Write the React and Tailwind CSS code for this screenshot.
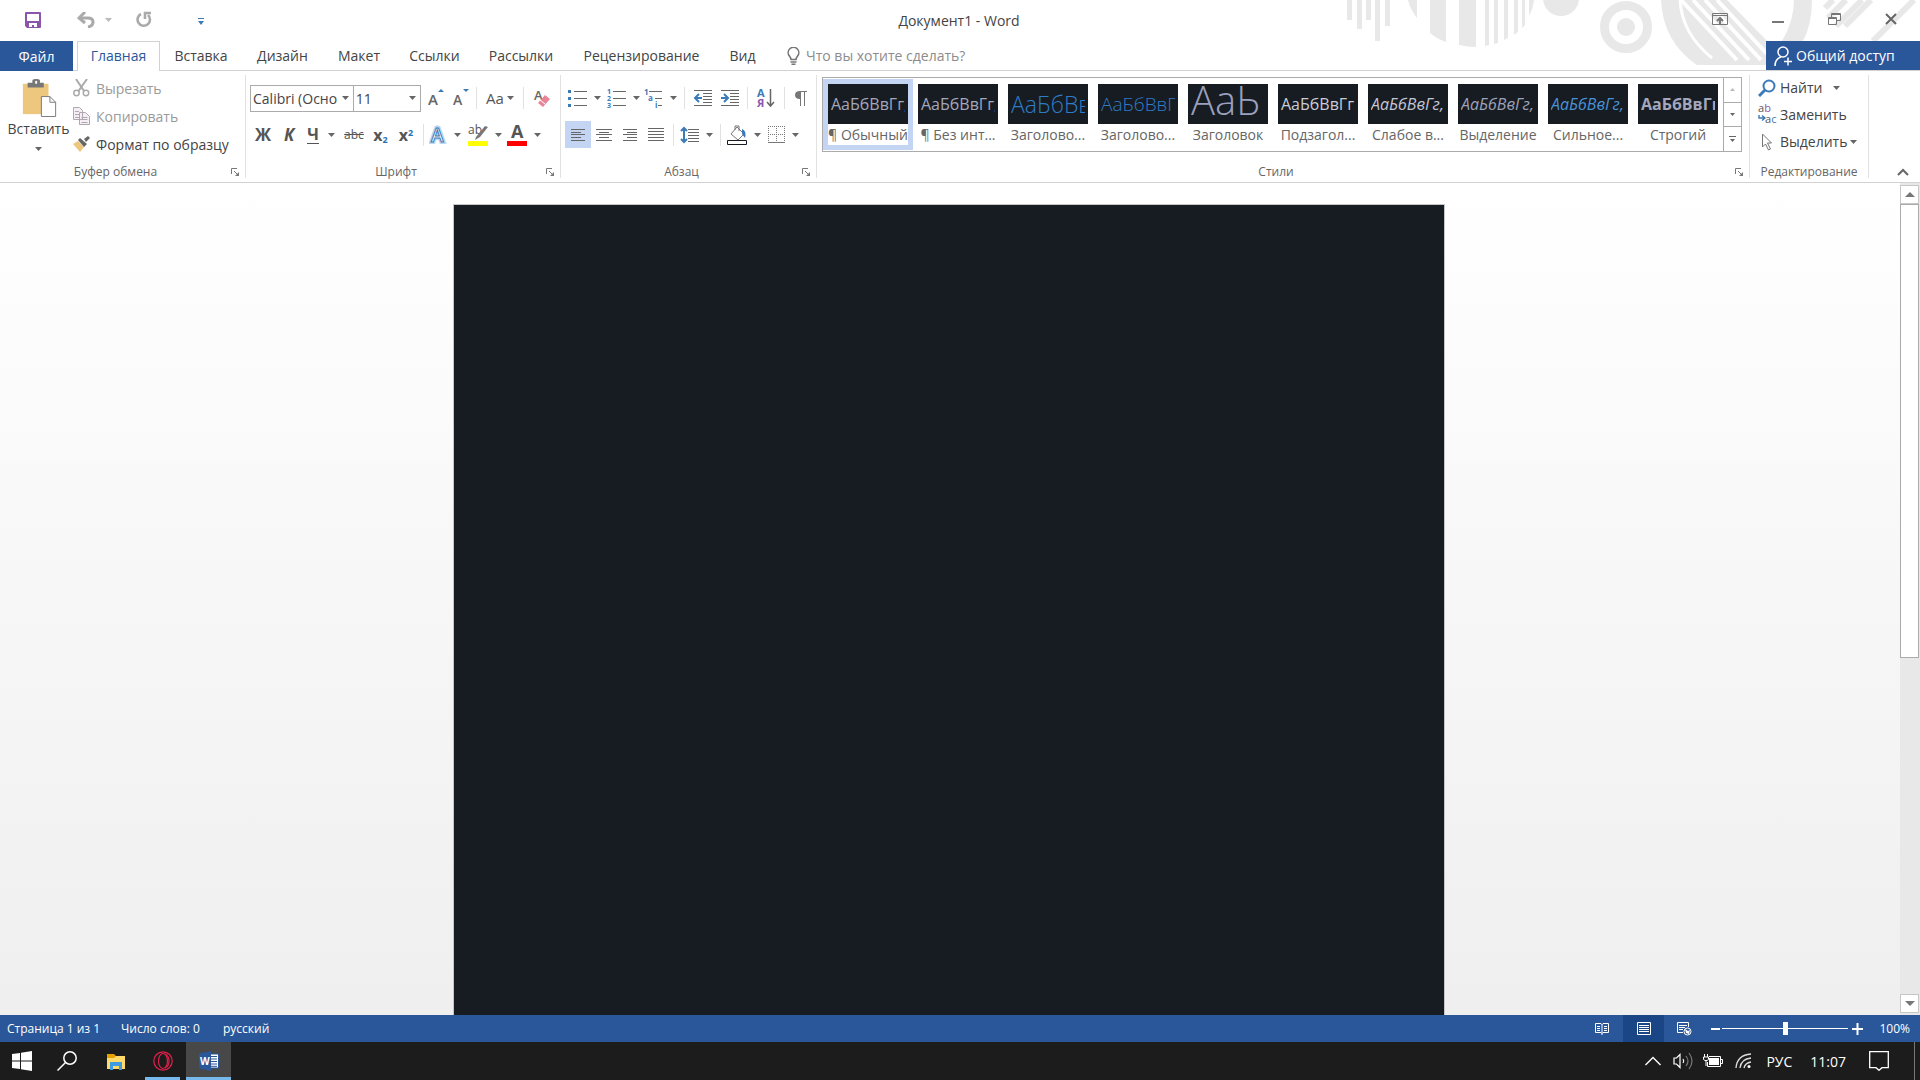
import React, { useState } from "react";
import clsx from "clsx";

const tabs = [
  { name: "Главная", width: "w-[83px]" },
  { name: "Вставка", width: "w-[82px]" },
  { name: "Дизайн", width: "w-[81px]" },
  { name: "Макет", width: "w-[72px]" },
  { name: "Ссылки", width: "w-[79px]" },
  { name: "Рассылки", width: "w-[94px]" },
  { name: "Рецензирование", width: "w-[147px]" },
  { name: "Вид", width: "w-[55px]" },
];

const styles = [
  { label: "¶ Обычный", sample: "АаБбВвГг,", look: "text-[16px] text-[#a3a7bb]" },
  { label: "¶ Без инт...", sample: "АаБбВвГг,", look: "text-[16px] text-[#a3a7bb]" },
  { label: "Заголово...", sample: "АаБбВв", look: "text-[23px] font-light text-[#2e7cc5]" },
  { label: "Заголово...", sample: "АаБбВвГ", look: "text-[19px] font-light text-[#2e7cc5]" },
  { label: "Заголовок", sample: "АаЬ", look: "text-[40px] text-[#9aa0bd] font-light -mt-2" },
  { label: "Подзагол...", sample: "АаБбВвГг", look: "text-[16px] text-[#c9ccd6]" },
  { label: "Слабое в...", sample: "АаБбВвГг,", look: "text-[16px] italic text-[#c3c6d6]" },
  { label: "Выделение", sample: "АаБбВвГг,", look: "text-[16px] italic text-[#9da2ba]" },
  { label: "Сильное...", sample: "АаБбВвГг,", look: "text-[16px] italic text-[#4a92d8]" },
  { label: "Строгий", sample: "АаБбВвГг,", look: "text-[16px] font-bold text-[#a3a7bb]" },
];

const Arrow = ({ className = "text-[#666]" }) => (
  <svg width="7" height="4" viewBox="0 0 7 4" className={clsx("shrink-0", className)}>
    <path d="M0 0h7L3.5 4z" fill="currentColor" />
  </svg>
);

const Sep = () => <div className="h-[22px] w-px shrink-0 bg-[#e1e1e1]" />;

const Tool = ({ label, width, active, arrow, children }) => (
  <button
    type="button"
    aria-label={label}
    className={clsx(
      "flex h-[27px] shrink-0 items-center justify-center gap-[7px] text-[#555]",
      width,
      active ? "bg-[#c3d5f2]" : "hover:bg-[#e3ebf7]"
    )}
  >
    {children}
    {arrow && <Arrow />}
  </button>
);

// Horizontal strokes, each one is [x1, x2, y]
const Lines = ({ w = 18, h = 16, rows, children }) => (
  <svg width={w} height={h} viewBox={`0 0 ${w} ${h}`} className="shrink-0 overflow-visible">
    {rows.map(([a, b, y]) => (
      <rect key={y} x={a} y={y} width={b - a} height="1" fill="#666" />
    ))}
    {children}
  </svg>
);

const Group = ({ title, launcher = true, className, children }) => (
  <section className={clsx("flex flex-col border-r border-[#e1e1e1]", className)}>
    <div className="flex-1">{children}</div>
    <div className="flex h-3 items-center text-[12px] text-[#666]">
      <span className={clsx("flex-1 text-center", launcher && "pl-1")}>{title}</span>
      {launcher && (
        <button type="button" aria-label={`Параметры: ${title}`} className="mr-1.5 ml-1">
          <svg width="8" height="8" viewBox="0 0 8 8" fill="none" stroke="#777">
            <path d="M.5 6V.5H6M3 3l3 3" />
            <path d="M8 4v4H4z" fill="#777" stroke="none" />
          </svg>
        </button>
      )}
    </div>
  </section>
);

const Backdrop = () => (
  <svg width="600" height="66" viewBox="0 0 600 66" className="absolute right-0 top-0" fill="#e8e8e8">
    <path d="M27 0h5v20h-5zM37 0h5v29h-5zM46 0h5v20h-5zM55 0h5v41h-5zM65 0h5v26h-5z" />
    <path d="M88 0h9v18Q90 9 88 0zM110 0h16v42Q117 39 110 33zM139 0h17v47Q147 47 139 45zM165 0h4v45l-4 1zM174 0h4v43l-4 1zM184 0h4v38l-4 2zM194 0h4v32l-4 3zM202 0h3v25l-3 3zM209 0h5q-1 9-5 16z" />
    <circle cx="241" cy="-2" r="18" />
    <circle cx="306" cy="27" r="21.5" fill="none" stroke="#e8e8e8" strokeWidth="9" />
    <circle cx="306" cy="27" r="9" />
    <path d="M341 0Q343 42 377 65H447V41L407 0z" />
    <g fill="none" stroke="#fff" strokeWidth="4">
      <path d="M360 0Q362 34 392 58" strokeWidth="3" />
      <path d="M361 0L417 60M373 0L429 60M385 0L441 60M397 0L449 56" />
    </g>
    <path d="M474 0h18q0 24-9 41h-21q12-20 12-41z" />
    <path d="M505 8L513 0M508 18L526 0M516 26L542 0M525 26L551 0M553 41L594 0" stroke="#e8e8e8" strokeWidth="6" />
  </svg>
);

const TitleBar = () => (
  <header className="relative flex h-[41px] items-center">
    <div className="flex flex-1 items-center pb-0.5 pl-[25px]">
      <button type="button" aria-label="Сохранить">
        <svg width="16" height="16" viewBox="0 0 16 16">
          <path d="M0 1q0-1 1-1h14q1 0 1 1v14q0 1-1 1H2l-2-2z" fill="#8a56ac" />
          <path d="M2 2h12v7H2zM4 11h8v4H9v-2H7v2H4z" fill="#fff" />
        </svg>
      </button>
      <button type="button" aria-label="Отменить" className="ml-9 flex items-center gap-2.5">
        <svg width="18" height="16" viewBox="0 0 18 16" fill="none" stroke="#aaa" strokeWidth="3">
          <path d="M2 6h9q5 0 5 4t-5 5" />
          <path d="M8 0L2 6l6 5" />
        </svg>
        <Arrow className="text-[#bbb]" />
      </button>
      <button type="button" aria-label="Повторить" className="ml-6">
        <svg width="16" height="17" viewBox="0 0 16 17" fill="none" stroke="#aaa" strokeWidth="2.6">
          <path d="M5 3a6.2 6.2 0 1 0 7 1" />
          <path d="M9 8V2h6" />
        </svg>
      </button>
      <button type="button" aria-label="Настройка панели" className="mt-1 ml-[46px]">
        <svg width="6" height="7" viewBox="0 0 6 7" fill="#3c7ab8">
          <path d="M0 0h6v1H0zM0 3h6L3 7z" />
        </svg>
      </button>
    </div>
    <h1 className="-ml-1 text-[14px] text-[#444]">Документ1 - Word</h1>
    <div className="flex flex-1 items-center justify-end pr-[23px] pb-1 text-[#666]">
      <Backdrop />
      <div className="relative flex items-center gap-11">
        <button type="button" aria-label="Параметры отображения ленты">
          <svg width="16" height="12" viewBox="0 0 16 12" fill="none" stroke="#777">
            <path d="M.5.5h15v11H.5zM0 2.5h16" />
            <path d="M8 11V5M5 8l3-3 3 3" strokeWidth="2" />
          </svg>
        </button>
        <button type="button" aria-label="Свернуть">
          <svg width="12" height="12" viewBox="0 0 12 12" fill="#777">
            <path d="M0 8h12v2H0z" />
          </svg>
        </button>
        <button type="button" aria-label="Восстановить">
          <svg width="13" height="12" viewBox="0 0 13 12" fill="none" stroke="#777">
            <path d="M.5 4.5h8v7h-8zM0 5.5h9M3.5 4V.5h9v7H9M3 1.5h10" />
          </svg>
        </button>
        <button type="button" aria-label="Закрыть">
          <svg width="12" height="12" viewBox="0 0 12 12" stroke="#666" strokeWidth="2">
            <path d="M1 1l10 10M11 1L1 11" />
          </svg>
        </button>
      </div>
    </div>
  </header>
);

const TabBar = () => {
  const [current, setCurrent] = useState("Главная");
  return (
    <nav className="relative flex h-[30px] border-b border-[#d2d2d2] text-[14px] text-[#444]">
      <button type="button" className="mr-1 h-[30px] w-[73px] shrink-0 bg-[#2a579a] text-white">
        Файл
      </button>
      {tabs.map((tab) => (
        <button
          key={tab.name}
          type="button"
          onClick={() => setCurrent(tab.name)}
          className={clsx(
            "h-[30px] shrink-0 pb-0.5 whitespace-nowrap",
            tab.width,
            tab.name === current && "border border-b-0 border-[#d2d2d2] bg-white text-[#2a579a]"
          )}
        >
          {tab.name}
        </button>
      ))}
      <label className="ml-[17px] flex items-center gap-1.5">
        <svg width="13" height="18" viewBox="0 0 13 18" fill="none" stroke="#777" strokeWidth="1.6">
          <path d="M4 12.5Q4 11 2.4 9A5.3 5.3 0 1 1 10.600 9Q9 11 9 12.500z" />
          <path d="M3.500 15h6M4.500 17.200h4" />
        </svg>
        <input
          aria-label="Что вы хотите сделать?"
          placeholder="Что вы хотите сделать?"
          className="w-[180px] bg-transparent outline-none placeholder:text-[#8c8c8c]"
        />
      </label>
      <button
        type="button"
        className="ml-auto flex h-[29px] w-[154px] items-center gap-1 bg-[#2a579a] pl-2 text-white"
      >
        <svg width="18" height="20" viewBox="0 0 18 20" fill="none" stroke="#fff" strokeWidth="1.5">
          <circle cx="9" cy="6" r="5" />
          <path d="M1 20q0-7 6-9M10 15.500h8M14 11.500v8" />
        </svg>
        Общий доступ
      </button>
    </nav>
  );
};

const Clipboard = () => (
  <Group title="Буфер обмена" className="w-[246px]">
    <div className="flex">
      <button type="button" className="flex w-[73px] flex-col items-center pt-1 pl-1 text-[14px] leading-5">
        <svg width="36" height="38" viewBox="0 0 36 40">
          <path d="M1 5h27v32H1z" fill="#eec77e" />
          <path d="M6 9V4h5V2q0-2 3-2h2q3 0 3 2v2h4v5z" fill="#777" />
          <path d="M14 2h2v3h-2z" fill="#fff" />
          <path d="M20.500 18.500h9l6 6v15h-15z" fill="#fff" stroke="#777" />
          <path d="M29.500 18.500v6h6" fill="none" stroke="#777" />
        </svg>
        <span className="mt-0.5">Вставить</span>
        <Arrow className="mt-2 text-[#666]" />
      </button>
      <div className="-mt-px flex flex-col text-[14px]">
        <button type="button" className="flex h-7 items-center gap-1.5 text-[#9a9a9a]">
          <svg width="17" height="18" viewBox="0 0 17 18" fill="none" stroke="#aaa" strokeWidth="1.5">
            <circle cx="3.500" cy="14" r="2.700" />
            <circle cx="13" cy="14" r="2.700" />
            <path d="M3 0l8 12M14 0L5.500 12" strokeWidth="2" />
          </svg>
          Вырезать
        </button>
        <button type="button" className="flex h-7 items-center gap-1.5 text-[#9a9a9a]">
          <svg width="17" height="18" viewBox="0 0 17 18" fill="#f5eef5" stroke="#b0a8b0">
            <path d="M.5.500h6l3 3v9h-9zM6.500 5.500h6l4 4v8h-10z" />
            <path d="M2 4.500h4M2 7.500h4M2 10.500h4M8.500 10.500h6M8.500 12.500h6M8.500 15.500h6" />
          </svg>
          Копировать
        </button>
        <button type="button" className="flex h-7 items-center gap-1.5">
          <svg width="17" height="16" viewBox="0 0 17 16">
            <path d="M0 8l5-3 6 6-4 5z" fill="#eec77e" />
            <path d="M5 4l2-2 7 6-3 3zM11 3l4-3 2 2-4 4z" fill="#666" />
          </svg>
          Формат по образцу
        </button>
      </div>
    </div>
  </Group>
);

const FontGroup = () => (
  <Group title="Шрифт" className="w-[315px]">
    <div className="flex h-[34px] items-center pl-1 pt-3">
      <div className="flex h-[27px] w-[105px] items-center border border-[#ababab] pr-1">
        <input aria-label="Шрифт" defaultValue="Calibri (Основной текст)" className="w-0 flex-1 pl-0.5 text-[14px] outline-none" />
        <Arrow className="ml-1 text-[#666]" />
      </div>
      <div className="-ml-px flex h-[27px] w-[69px] items-center border border-[#ababab] pr-1">
        <input aria-label="Размер шрифта" defaultValue="11" className="w-0 flex-1 pl-0.5 text-[14px] outline-none" />
        <Arrow />
      </div>
      <div className="flex items-center pl-0.5">
        <Tool label="Увеличить размер" width="w-[26px]">
          <svg width="17" height="20" viewBox="0 0 17 20">
            <text x="0" y="17" fontSize="15" fontWeight="600" fill="#666">A</text>
            <path d="M10 4l3-3 3 3z" fill="#3c7ab8" />
          </svg>
        </Tool>
        <Tool label="Уменьшить размер" width="w-[25px]">
          <svg width="17" height="20" viewBox="0 0 17 20">
            <text x="0" y="17" fontSize="14" fontWeight="600" fill="#666">A</text>
            <path d="M10 1h6l-3 3z" fill="#3c7ab8" />
          </svg>
        </Tool>
        <div className="pl-0.5"><Sep /></div>
        <Tool label="Регистр" width="w-[46px]" arrow>
          <span className="-mr-1 text-[15px]">Aa</span>
        </Tool>
        <Sep />
        <Tool label="Очистить формат" width="w-[36px]">
          <svg width="18" height="20" viewBox="0 0 18 20">
            <text x="1" y="12" fontSize="13" fontWeight="600" fill="#666">A</text>
            <path d="M12 7l5 4-7 8-5-4z" fill="#e8849a" />
            <path d="M7 12l5 4" stroke="#fff" />
          </svg>
        </Tool>
      </div>
    </div>
    <div className="mt-3 flex items-center pl-1">
      <Tool label="Полужирный" width="w-[26px]"><b className="text-[17px]">Ж</b></Tool>
      <Tool label="Курсив" width="w-[26px]"><b className="text-[17px] italic">К</b></Tool>
      <Tool label="Подчеркнутый" width="w-[38px]" arrow>
        <span className="mr-0.5 border-b border-[#555] text-[16px] leading-[17px] font-bold">Ч</span>
      </Tool>
      <Tool label="Зачеркнутый" width="w-[28px]"><s className="text-[12px]">abc</s></Tool>
      <Tool label="Подстрочный" width="w-[25px]">
        <span className="text-[16px] font-bold">x<sub className="text-[9px] text-[#2a70b8]">2</sub></span>
      </Tool>
      <Tool label="Надстрочный" width="w-[26px]">
        <span className="text-[16px] font-bold">x<sup className="text-[9px] text-[#2a70b8]">2</sup></span>
      </Tool>
      <div className="pl-1"><Sep /></div>
      <Tool label="Текстовые эффекты" width="w-[42px]" arrow>
        <svg width="18" height="20" viewBox="0 0 18 20">
          <text x="2" y="17" fontSize="19" fontWeight="600" fill="#fff" stroke="#bcd8f4" strokeWidth="4">A</text>
          <text x="2" y="17" fontSize="19" fontWeight="600" fill="#fff" stroke="#3c7ab8" strokeWidth="1">A</text>
        </svg>
      </Tool>
      <Tool label="Цвет выделения" width="w-[38px]" arrow>
        <svg width="20" height="22" viewBox="0 0 20 22" className="overflow-visible">
          <text x="0" y="10" fontSize="12" fill="#555">ab</text>
          <path d="M17 2l3 1-8 10-5 3 1-3z" fill="#777" />
          <path d="M0 17h20v5H0z" fill="#ff0" />
        </svg>
      </Tool>
      <Tool label="Цвет текста" width="w-[40px]" arrow>
        <svg width="20" height="22" viewBox="0 0 20 22" className="overflow-visible">
          <text x="4" y="14" fontSize="18" fontWeight="700" fill="#555">A</text>
          <path d="M0 17h20v5H0z" fill="#f00" />
        </svg>
      </Tool>
    </div>
  </Group>
);

const Paragraph = () => (
  <Group title="Абзац" className="w-[256px]">
    <div className="flex h-[34px] items-center pl-1 pt-3">
      <Tool label="Маркеры" width="w-[39px]" arrow>
        <Lines w={19} h={18} rows={[[6, 19, 2], [6, 19, 9], [6, 19, 16]]}>
          <path d="M0 1h3v3H0zM0 8h3v3H0zM0 15h3v3H0z" fill="#3c7ab8" />
        </Lines>
      </Tool>
      <Tool label="Нумерация" width="w-[38px]" arrow>
        <Lines w={19} h={19} rows={[[6, 19, 2], [6, 19, 9], [6, 19, 16]]}>
          <g fontSize="7" fontWeight="700" fill="#3c7ab8">
            <text x="0" y="5">1</text>
            <text x="0" y="12">2</text>
            <text x="0" y="19">3</text>
          </g>
        </Lines>
      </Tool>
      <Tool label="Многоуровневый список" width="w-[36px]" arrow>
        <Lines w={19} h={19} rows={[[5, 18, 2], [11, 18, 9], [14, 18, 16]]}>
          <g fontSize="8" fontWeight="700" fill="#3c7ab8">
            <text x="0" y="6">1</text>
            <text x="4" y="12">a</text>
            <text x="11" y="19">i</text>
          </g>
        </Lines>
      </Tool>
      <div className="pr-1 pl-1.5"><Sep /></div>
      <Tool label="Уменьшить отступ" width="w-[28px]">
        <Lines rows={[[0, 18, 0], [9, 18, 3], [9, 18, 6], [9, 18, 9], [9, 18, 12], [0, 18, 15]]}>
          <path d="M5 4L1 8l4 4M1 8h7" fill="none" stroke="#3c7ab8" strokeWidth="2" />
        </Lines>
      </Tool>
      <Tool label="Увеличить отступ" width="w-[26px]">
        <Lines rows={[[0, 18, 0], [9, 18, 3], [9, 18, 6], [9, 18, 9], [9, 18, 12], [0, 18, 15]]}>
          <path d="M3 4l4 4-4 4M0 8h7" fill="none" stroke="#3c7ab8" strokeWidth="2" />
        </Lines>
      </Tool>
      <div className="px-1"><Sep /></div>
      <Tool label="Сортировка" width="w-[28px]">
        <svg width="18" height="20" viewBox="0 0 18 20" className="overflow-visible">
          <g fontSize="11" fontWeight="700">
            <text x="0" y="9" fill="#3c7ab8">А</text>
            <text x="0" y="19" fill="#8a56ac">Я</text>
          </g>
          <path d="M13.500 1v17M10 14l3.500 4 3.500-4" fill="none" stroke="#666" strokeWidth="1.500" />
        </svg>
      </Tool>
      <div className="px-1"><Sep /></div>
      <Tool label="Отобразить все знаки" width="w-[24px]">
        <svg width="12" height="15" viewBox="0 0 12 15" fill="#777">
          <path d="M5 8Q0 8 0 4t5-4h7v1h-2v14H9V1H6v14H5z" />
        </svg>
      </Tool>
    </div>
    <div className="mt-3 flex items-center pl-1">
      <Tool label="По левому краю" width="w-[26px]" active>
        <Lines w={14} h={12} rows={[[0, 14, 0], [0, 10, 3], [0, 14, 5], [0, 10, 8], [0, 14, 11]]} />
      </Tool>
      <Tool label="По центру" width="w-[26px]">
        <Lines w={16} h={12} rows={[[0, 16, 0], [3, 13, 3], [0, 16, 5], [3, 13, 8], [0, 16, 11]]} />
      </Tool>
      <Tool label="По правому краю" width="w-[26px]">
        <Lines w={14} h={12} rows={[[0, 14, 0], [4, 14, 3], [0, 14, 5], [4, 14, 8], [0, 14, 11]]} />
      </Tool>
      <Tool label="По ширине" width="w-[26px]">
        <Lines w={16} h={13} rows={[[0, 16, 0], [0, 16, 3], [0, 16, 6], [0, 16, 9], [0, 16, 12]]} />
      </Tool>
      <div className="px-1"><Sep /></div>
      <Tool label="Интервал" width="w-[38px]" arrow>
        <Lines w={18} h={18} rows={[[7, 18, 3], [7, 18, 6], [7, 18, 9], [7, 18, 12], [7, 18, 15]]}>
          <path d="M3 2v14M0 5l3-3 3 3M0 13l3 3 3-3" fill="none" stroke="#3c7ab8" strokeWidth="2" />
        </Lines>
      </Tool>
      <div className="px-1"><Sep /></div>
      <Tool label="Заливка" width="w-[38px]" arrow>
        <svg width="20" height="20" viewBox="0 0 20 20" fill="none" stroke="#777">
          <path d="M10 2l7 7-6 6-7-6z" fill="#fff" />
          <path d="M8 5V1h4v5" />
          <path d="M15 4q5 2 3 9l-3-4z" fill="#3c7ab8" stroke="none" />
          <path d="M.5 15.500h19v4H.5z" fill="#fff" stroke="#171b22" />
        </svg>
      </Tool>
      <Tool label="Границы" width="w-[40px]" arrow>
        <svg width="17" height="17" viewBox="0 0 17 17" fill="none" stroke="#777">
          <path d="M.5 0v16M8.500 0v16M16.500 0v16M0 .500h17M0 8.500h17" strokeDasharray="1 1" />
          <path d="M0 16.500h17" />
        </svg>
      </Tool>
    </div>
  </Group>
);

const StylesGroup = () => {
  const [selected, setSelected] = useState(0);
  return (
    <Group title="Стили" className="min-w-0 flex-1">
      <div className="mt-0.5 ml-[5px] mr-[7px] flex h-[75px] border border-[#ababab]">
        <div className="flex min-w-0 flex-1 overflow-hidden py-px">
          {styles.map((style, i) => (
            <button
              key={i}
              type="button"
              onClick={() => setSelected(i)}
              className={clsx(
                "flex w-[90px] shrink-0 flex-col border-[5px] text-[#666]",
                i === selected ? "border-[#c3d5f2]" : "border-transparent"
              )}
            >
              <span className="flex h-10 w-full items-center overflow-hidden bg-[#171b22] px-[3px]">
                <span className={clsx("w-full overflow-hidden text-left whitespace-nowrap", style.look)}>
                  {style.sample}
                </span>
              </span>
              <span className="w-full pt-px text-center text-[14px] leading-5 whitespace-nowrap">{style.label}</span>
            </button>
          ))}
        </div>
        <div className="flex w-[18px] flex-col divide-y divide-[#ababab] border-l border-[#ababab]">
          <button type="button" aria-label="Вверх" className="flex flex-1 items-center justify-center">
            <svg width="5" height="3" viewBox="0 0 5 3"><path d="M0 3h5L2.500 0z" fill="#bbb" /></svg>
          </button>
          <button type="button" aria-label="Вниз" className="flex flex-1 items-center justify-center">
            <svg width="5" height="3" viewBox="0 0 5 3"><path d="M0 0h5L2.500 3z" fill="#666" /></svg>
          </button>
          <button type="button" aria-label="Все стили" className="flex flex-1 items-center justify-center">
            <svg width="7" height="6" viewBox="0 0 7 6"><path d="M0 0h7v1H0zM1 3h5L3.500 6z" fill="#666" /></svg>
          </button>
        </div>
      </div>
    </Group>
  );
};

const Editing = () => (
  <Group title="Редактирование" launcher={false} className="w-[119px]">
    <div className="-mt-px flex flex-col pl-2 text-[14px]">
      <button type="button" className="flex h-[27px] items-center gap-1">
        <svg width="18" height="18" viewBox="0 0 18 18" fill="none" stroke="#3c7ab8" strokeWidth="2">
          <circle cx="11" cy="7" r="5.500" />
          <path d="M7 11l-6 6" strokeWidth="3" />
        </svg>
        Найти
        <Arrow className="ml-1.5 text-[#666]" />
      </button>
      <button type="button" className="flex h-[27px] items-center gap-1">
        <svg width="18" height="19" viewBox="0 0 18 19" fontSize="11" className="overflow-visible">
          <text x="0" y="7" fill="#555">a<tspan fill="#8a56ac">b</tspan></text>
          <text x="7" y="18" fill="#555">a<tspan fill="#3c7ab8">c</tspan></text>
          <path d="M1 10v3h5M4 10.500l3 2.500-3 2.500" fill="none" stroke="#3c7ab8" strokeWidth="1.400" />
        </svg>
        Заменить
      </button>
      <button type="button" className="flex h-[27px] items-center gap-1">
        <svg width="18" height="18" viewBox="0 0 18 18" fill="#fff" stroke="#777">
          <path d="M4.500 1v13l3-3 3 6 2-1-3-6h4z" />
        </svg>
        Выделить
        <Arrow className="-ml-px text-[#666]" />
      </button>
    </div>
  </Group>
);

const Ribbon = () => (
  <div className="flex h-28 border-b border-[#d2d2d2] pt-1 pb-1 text-[#444]">
    <Clipboard />
    <FontGroup />
    <Paragraph />
    <StylesGroup />
    <Editing />
    <div className="flex w-[51px] items-end pb-0.5 pl-7">
      <button type="button" aria-label="Свернуть ленту">
        <svg width="12" height="8" viewBox="0 0 12 8" fill="none" stroke="#666" strokeWidth="2">
          <path d="M1 7l5-5 5 5" />
        </svg>
      </button>
    </div>
  </div>
);

const Document = () => (
  <main className="flex min-h-0 flex-1 bg-gradient-to-b from-white to-[#efefef]">
    <div className="flex flex-1 justify-center pt-[21px] pr-[3px]">
      <div className="w-[992px] border border-b-0 border-[#c6c6c6] bg-[#171b22]" />
    </div>
    <div className="flex w-5 flex-col bg-[#e8e8e8] pt-0.5 pr-px pb-0.5">
      <button type="button" aria-label="Прокрутить вверх" className="flex h-[19px] items-center justify-center border border-[#c6c6c6] bg-white">
        <svg width="10" height="5" viewBox="0 0 10 5"><path d="M0 5h10L5 0z" fill="#777" /></svg>
      </button>
      <div className="h-[454px] border border-[#ababab] bg-white" />
      <button type="button" aria-label="Прокрутить вниз" className="mt-auto flex h-[19px] items-center justify-center border border-[#c6c6c6] bg-white">
        <svg width="10" height="5" viewBox="0 0 10 5"><path d="M0 0h10L5 5z" fill="#777" /></svg>
      </button>
    </div>
  </main>
);

const StatusBar = () => {
  const [zoom, setZoom] = useState(50);
  return (
    <div className="flex h-[27px] items-center bg-[#2a579a] text-[12px] text-white">
      <span className="w-[114px] pl-[7px] whitespace-nowrap">Страница 1 из 1</span>
      <span className="w-[102px] pl-[7px] whitespace-nowrap">Число слов: 0</span>
      <span className="pl-[7px]">русский</span>
      <div className="ml-auto flex h-full items-center">
        <button type="button" aria-label="Режим чтения" className="flex h-full w-[42px] items-center justify-center">
          <svg width="14" height="13" viewBox="0 0 14 13" fill="none" stroke="#fff">
            <path d="M.5 1.500H6l1 1 1-1h5.500v9H8l-1 1-1-1H.500zM7 2v11M2 4.500h3M2 6.500h3M2 8.500h3M9 4.500h3M9 6.500h3M9 8.500h3" />
          </svg>
        </button>
        <button type="button" aria-label="Разметка страницы" className="flex h-full w-[41px] items-center justify-center bg-[#1b4686]">
          <svg width="14" height="13" viewBox="0 0 14 13" fill="none" stroke="#fff">
            <path d="M.5.500h13v12H.500zM2 3.500h10M2 5.500h10M2 7.500h10M2 9.500h10" />
          </svg>
        </button>
        <button type="button" aria-label="Веб-документ" className="flex h-full w-[41px] items-center justify-center">
          <svg width="15" height="14" viewBox="0 0 15 14" fill="none" stroke="#fff">
            <path d="M6 10.500H.500V.500h11V5M2 3.500h8M2 5.500h6M2 7.500h4" />
            <circle cx="10.500" cy="9.500" r="3.500" fill="#2a579a" />
            <path d="M8 7l3 2 2-1-1 4-3-1z" fill="#fff" stroke="none" />
          </svg>
        </button>
        <button type="button" aria-label="Уменьшить" className="ml-1">
          <svg width="13" height="12" viewBox="0 0 13 12"><path d="M2 5h9v2H2z" fill="#fff" /></svg>
        </button>
        <input
          type="range"
          aria-label="Масштаб"
          value={zoom}
          onChange={(e) => setZoom(e.target.value)}
          className="w-[126px] appearance-none bg-transparent [&::-webkit-slider-runnable-track]:h-px [&::-webkit-slider-runnable-track]:bg-white [&::-webkit-slider-thumb]:-mt-1.5 [&::-webkit-slider-thumb]:h-[13px] [&::-webkit-slider-thumb]:w-[5px] [&::-webkit-slider-thumb]:appearance-none [&::-webkit-slider-thumb]:bg-white"
        />
        <button type="button" aria-label="Увеличить" className="ml-1">
          <svg width="11" height="12" viewBox="0 0 11 12"><path d="M0 5h11v2H0zM4.500 0h2v12h-2z" fill="#fff" /></svg>
        </button>
        <span className="w-[57px] pr-2.5 text-right">100%</span>
      </div>
    </div>
  );
};

const Taskbar = () => (
  <footer className="flex h-[38px] items-center bg-[#1c1c1c] text-white">
    <button type="button" aria-label="Пуск" className="flex w-11 justify-center">
      <svg width="20" height="20" viewBox="0 0 20 20" fill="#fff">
        <path d="M0 3l8-1v7.500H0zM9 1.800L20 0v9.500H9zM0 10.500h8V18l-8-1zM9 10.500h11V20L9 18.200z" />
      </svg>
    </button>
    <button type="button" aria-label="Поиск" className="flex w-[46px] justify-center">
      <svg width="20" height="20" viewBox="0 0 20 20" fill="none" stroke="#fff" strokeWidth="1.500">
        <circle cx="13" cy="7" r="6.200" />
        <path d="M8.500 11.500L.500 19.500" />
      </svg>
    </button>
    <button type="button" aria-label="Проводник" className="ml-[3px] flex h-full w-[46px] items-center justify-center">
      <svg width="18" height="17" viewBox="0 0 18 17">
        <path d="M0 1h7l2 2h9v13H0z" fill="#e8a000" />
        <path d="M0 5h7l2-2h9v13H0z" fill="#ffd96a" />
        <path d="M3 9h12v8h-3v-4H6v4H3z" fill="#3f9be0" />
      </svg>
    </button>
    <button type="button" aria-label="Opera" className="ml-1.5 flex h-full w-[35px] items-center justify-center border-b-[3px] border-[#76b9ed] pt-[3px]">
      <svg width="20" height="20" viewBox="0 0 20 20" fill="none" stroke="#e0214b" strokeWidth="1.200">
        <circle cx="10" cy="10" r="9.200" />
        <ellipse cx="10" cy="10" rx="4.500" ry="7.500" />
        <path d="M12 3q4 2 4 7t-4 7" />
      </svg>
    </button>
    <button type="button" aria-label="Word" className="ml-1.5 flex h-full w-[45px] items-center justify-center border-b-[3px] border-[#76b9ed] bg-[#484848] pt-[3px]">
      <svg width="20" height="20" viewBox="0 0 20 20">
        <path d="M10 3h9.500v14H10z" fill="#fff" stroke="#2a579a" />
        <path d="M12 5.500h6M12 8h6M12 10.500h6M12 13h6M12 15.300h6" stroke="#2a579a" />
        <path d="M0 2.500L12 0v20L0 17.500z" fill="#2a579a" />
        <text x="1" y="14" fontSize="10" fontWeight="700" fill="#fff">W</text>
      </svg>
    </button>
    <div className="ml-auto flex h-full items-center text-[14px]">
      <button type="button" aria-label="Скрытые значки" className="mr-3">
        <svg width="16" height="10" viewBox="0 0 16 10" fill="none" stroke="#fff" strokeWidth="1.400">
          <path d="M.500 9L8 1.500 15.500 9" />
        </svg>
      </button>
      <button type="button" aria-label="Громкость" className="mr-2.5">
        <svg width="20" height="18" viewBox="0 0 20 18" fill="none" stroke="#fff" strokeWidth="1.200">
          <path d="M1 6h2.500L7 2.500v13L3.500 12H1z" />
          <path d="M10 7q1.500 2 0 4" />
          <path d="M13 4q4 5 0 10M16 1q6 8 0 16" stroke="#777" />
        </svg>
      </button>
      <button type="button" aria-label="Батарея" className="mr-3">
        <svg width="20" height="14" viewBox="0 0 20 14" fill="none" stroke="#fff">
          <path d="M6 2.500h11.500v10H4.500V8M18 5.500h1.500v4H18" />
          <path d="M6 4h10v7H6z" fill="#fff" stroke="none" />
          <path d="M1.500 0v3M4.500 0v3M.500 3h5v2.500l-1.500 1h-2l-1.500-1zM3 6v6" fill="#1c1c1c" />
        </svg>
      </button>
      <button type="button" aria-label="Сеть" className="mr-3.5">
        <svg width="17" height="16" viewBox="0 0 17 16" fill="none" stroke="#ddd" strokeWidth="1.300">
          <path d="M1 15Q2 2 16 1M5 15Q6 6 16 5M9 15Q10 10 16 9" />
          <circle cx="14" cy="13.500" r="1.500" fill="#fff" stroke="none" />
        </svg>
      </button>
      <button type="button" className="mr-[18px]">РУС</button>
      <time className="mr-[23px]">11:07</time>
      <button type="button" aria-label="Уведомления" className="mr-[25px]">
        <svg width="20" height="20" viewBox="0 0 20 20" fill="none" stroke="#fff" strokeWidth="1.300">
          <path d="M.700.700h18.600v16H13l-3 2.600-3-2.600H.700z" />
        </svg>
      </button>
      <button type="button" aria-label="Показать рабочий стол" className="h-full w-1.5 border-l border-[#777]" />
    </div>
  </footer>
);

export default function App() {
  return (
    <div className="flex h-screen min-w-[1400px] flex-col overflow-hidden bg-white font-['Open_Sans','Noto_Sans',sans-serif]">
      <TitleBar />
      <TabBar />
      <Ribbon />
      <Document />
      <StatusBar />
      <Taskbar />
    </div>
  );
}
